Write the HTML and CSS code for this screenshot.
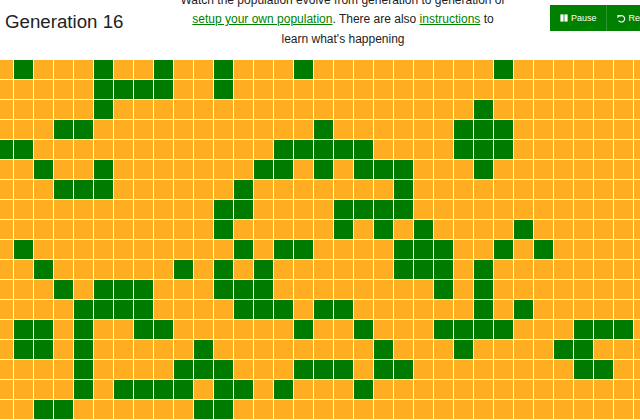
FILE: index.html
```html
<!DOCTYPE html>
<html>
<head>
    <title>Game of Life</title>
    <link rel="stylesheet" href="styles.css">
</head>
<body>
    <div class="header">
        <h1 class="generation">Generation 16</h1>
        <p class="intro">
            Watch the population evolve from generation to generation or
            <a href="#">setup your own population</a>. There are also
            <a href="#">instructions</a> to learn what's happening
        </p>
        <div class="controls">
            <button class="control">
                <svg class="icon" viewBox="0 0 10 10"><rect x="0.5" y="0.5" width="4" height="9"/><rect x="5.5" y="0.5" width="4" height="9"/></svg>
                Pause
            </button>
            <button class="control">
                <svg class="icon icon-reset" viewBox="0 0 12 12"><path class="icon-line" d="M3 3.2A4.3 4.3 0 1 1 2.2 8.6"/><path d="M0.6 1.2L5.2 1.2L0.6 5.8Z"/></svg>
                Reset
            </button>
        </div>
    </div>
    <div id="grid" class="grid"></div>

    <script>
        // Live cells per row, as column numbers
        const rows = [
            [1, 5, 8, 11, 15, 25],
            [5, 6, 7, 8, 11],
            [5, 24],
            [3, 4, 16, 23, 24, 25],
            [0, 1, 14, 15, 16, 17, 18, 23, 24, 25],
            [2, 5, 13, 14, 16, 18, 19, 20, 24],
            [3, 4, 5, 12, 20],
            [11, 12, 17, 18, 19, 20],
            [11, 17, 19, 21, 26],
            [1, 12, 14, 15, 20, 21, 22, 25, 27],
            [2, 9, 11, 13, 20, 21, 22, 24],
            [3, 5, 6, 7, 11, 12, 13, 22, 24],
            [4, 5, 6, 7, 12, 13, 14, 16, 17, 24, 26],
            [1, 2, 4, 7, 8, 15, 18, 22, 23, 24, 25, 29, 30, 31],
            [1, 2, 4, 10, 19, 23, 28, 29],
            [4, 9, 10, 11, 15, 16, 17, 19, 20, 29, 30],
            [4, 6, 7, 8, 9, 11, 12, 14, 18],
            [2, 3, 10, 11]
        ];
        const columns = 33;
        const grid = document.getElementById('grid');

        rows.forEach(live => {
            for (let col = 0; col < columns; col++) {
                const cell = document.createElement('div');
                cell.className = live.includes(col) ? 'cell alive' : 'cell';
                grid.appendChild(cell);
            }
        });
    </script>
</body>
</html>
```

FILE: styles.css
```css
html, body {
    margin: 0;
    height: 100%;
    overflow: hidden;
}
body {
    font-family: "Liberation Sans", Arial, sans-serif;
    color: #222;
    background: #fff;
}
.header {
    display: flex;
    align-items: flex-start;
    height: 60px;
    overflow: hidden;
}
.generation {
    flex: 0 0 174px;
    margin: 10px 0 0 5px;
    font-size: 18.7px;
    font-weight: normal;
    line-height: 24px;
}
.intro {
    flex: 0 0 328px;
    margin: -9px 0 0;
    font-size: 12px;
    line-height: 19.3px;
    text-align: center;
}
.intro a {
    color: #008000;
}
.controls {
    display: flex;
    flex: 0 0 auto;
    margin: 5px 0 0 43px;
}
.control {
    display: flex;
    align-items: center;
    gap: 3px;
    height: 26px;
    padding: 0 9px 0 10px;
    border: none;
    border-right: 1px solid #2e962e;
    background: #008000;
    color: #fff;
    font-family: inherit;
    font-size: 9px;
}
.icon {
    width: 8px;
    height: 8px;
    fill: #fff;
}
.icon-reset {
    width: 9px;
    height: 9px;
}
.icon-line {
    fill: none;
    stroke: #fff;
    stroke-width: 1.5;
}
.grid {
    display: grid;
    grid-template-columns: repeat(33, 19px);
    grid-auto-rows: 19px;
    gap: 1px;
    margin-left: -6px;
}
.cell {
    background: #ffad21;
}
.cell.alive {
    background: #007b00;
}
```
